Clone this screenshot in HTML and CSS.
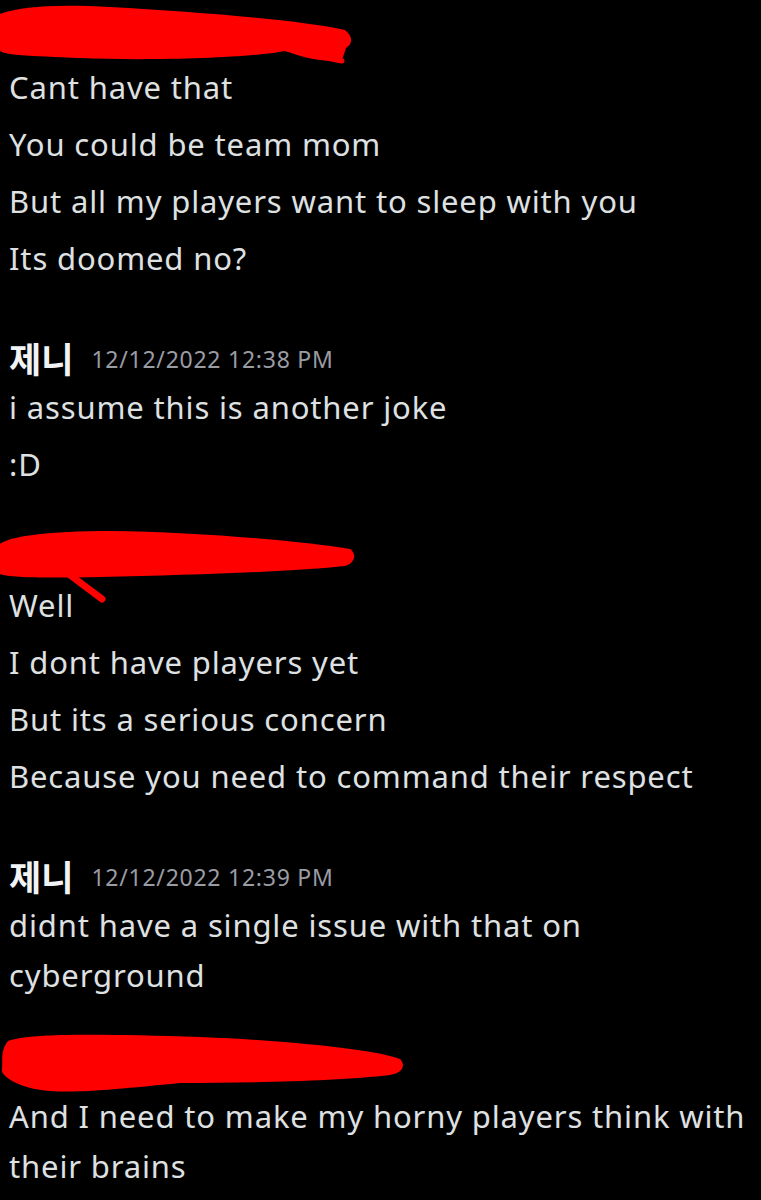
FILE: index.html
```html
<!DOCTYPE html>
<html lang="en">
<head>
<meta charset="utf-8">
<title>Chat</title>
<link rel="stylesheet" href="styles.css">
</head>
<body>
<main class="chat">
  <section class="group group-first redacted">
    <div class="header">
      <svg class="scribble s1" width="360" height="70" viewBox="0 0 360 70" aria-hidden="true">
        <path d="M0,14 C20,6 60,4 110,7 C200,12 300,20 345,30 C353,36 353,44 346,48 L342,60 C320,63 300,56 285,51 C250,58 150,61 80,58 C30,56 0,55 0,50 C-2,40 -2,22 0,14 Z" fill="#ff0000"/>
        <path d="M282,48 C305,52 325,58 342,61" stroke="#ff0000" stroke-width="5" fill="none" stroke-linecap="round"/>
      </svg>
    </div>
    <div class="lines">
      <p class="line">Cant have that</p>
      <p class="line">You could be team mom</p>
      <p class="line">But all my players want to sleep with you</p>
      <p class="line">Its doomed no?</p>
    </div>
  </section>

  <section class="group">
    <div class="header">
      <span class="name">제니</span>
      <span class="time">12/12/2022 12:38 PM</span>
    </div>
    <div class="lines">
      <p class="line">i assume this is another joke</p>
      <p class="line">:D</p>
    </div>
  </section>

  <section class="group redacted">
    <div class="header">
      <svg class="scribble s2" width="360" height="90" viewBox="0 0 360 90" aria-hidden="true">
        <path d="M0,22 C10,14 50,9 110,9 C200,10 300,19 350,27 C357,32 355,41 345,44 C300,49 200,53 100,55 C50,56 10,56 0,52 Z" fill="#ff0000"/>
        <path d="M66,50 L102,77" stroke="#ff0000" stroke-width="7" stroke-linecap="round"/>
      </svg>
    </div>
    <div class="lines">
      <p class="line">Well</p>
      <p class="line">I dont have players yet</p>
      <p class="line">But its a serious concern</p>
      <p class="line">Because you need to command their respect</p>
    </div>
  </section>

  <section class="group">
    <div class="header">
      <span class="name">제니</span>
      <span class="time">12/12/2022 12:39 PM</span>
    </div>
    <div class="lines">
      <p class="line wrap">didnt have a single issue with that on cyberground</p>
    </div>
  </section>

  <section class="group redacted">
    <div class="header">
      <svg class="scribble s3" width="410" height="80" viewBox="0 0 410 80" aria-hidden="true">
        <path d="M8,20 C30,12 100,13 200,16 C300,20 380,30 400,38 C406,44 403,52 390,54 C340,60 250,62 180,62 C120,68 80,72 50,70 C20,68 0,55 2,48 C3,40 0,30 8,20 Z" fill="#ff0000"/>
      </svg>
    </div>
    <div class="lines">
      <p class="line wrap">And I need to make my horny players think with their brains</p>
    </div>
  </section>
</main>
</body>
</html>
```

FILE: styles.css
```css
html, body {
  margin: 0;
  padding: 0;
  background: #000;
}

body {
  width: 761px;
  height: 1200px;
  overflow: hidden;
  font-family: "Noto Sans", "Open Sans", sans-serif;
  color: #dfe0e2;
}

.chat {
  display: flex;
  flex-direction: column;
  padding: 0 0 0 9px;
}

.group {
  display: flex;
  flex-direction: column;
  margin-top: 50px;
}

.group.redacted {
  margin-top: 42px;
}

.group.group-first {
  margin-top: 13px;
}

.header {
  position: relative;
  height: 49px;
  display: flex;
  align-items: center;
  gap: 18px;
}

.scribble {
  position: absolute;
  left: -9px;
}

.s1 { top: -13px; }
.s2 { top: -9px; }
.s3 { top: -21px; }

.name {
  font-family: "Noto Sans CJK KR", sans-serif;
  font-weight: 700;
  font-size: 35px;
  color: #f2f3f5;
  line-height: 1;
}

.time {
  font-family: "Noto Sans", sans-serif;
  font-size: 23px;
  letter-spacing: 0.75px;
  color: #9a9ca4;
  line-height: 1;
  padding-top: 4px;
}

.lines {
  display: flex;
  flex-direction: column;
  gap: 7px;
}

.line {
  margin: 0;
  font-size: 31px;
  letter-spacing: 0.85px;
  line-height: 50px;
}

.wrap {
  max-width: 745px;
}
```
